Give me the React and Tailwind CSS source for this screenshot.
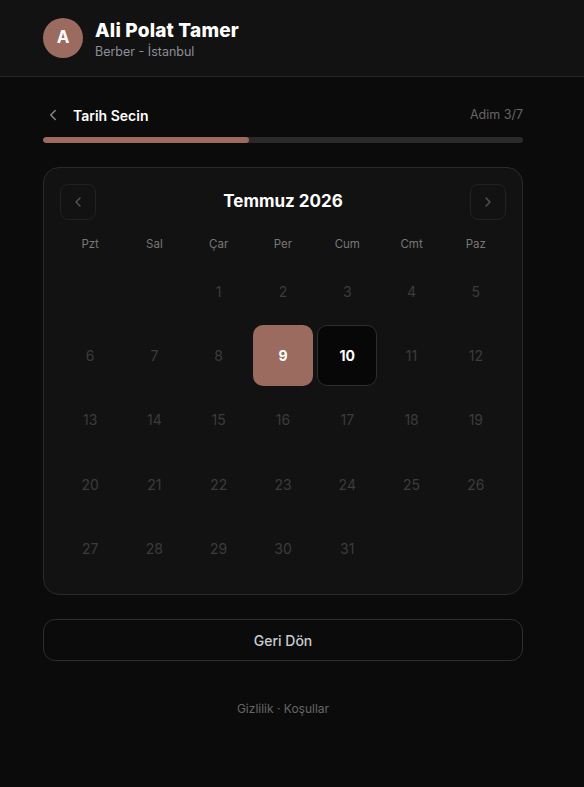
import React, { useState } from 'react';
import { ChevronLeft, ChevronRight } from 'lucide-react';

const WEEKDAYS = ['Pzt', 'Sal', 'Çar', 'Per', 'Cum', 'Cmt', 'Paz'];

// July 2026 starts on a Wednesday -> two empty slots before the 1st
const LEAD = 2;
const DAYS_IN_MONTH = 31;

export default function App() {
  const [selected, setSelected] = useState(9);
  const today = 10;

  const cells = [
    ...Array.from({ length: LEAD }, () => null),
    ...Array.from({ length: DAYS_IN_MONTH }, (_, i) => i + 1),
  ];

  return (
    <div className="min-h-screen bg-[#0b0b0b] text-white font-['Inter',sans-serif]">
      {/* HEADER */}
      <header className="h-[77px] bg-[#121212] border-b border-[#262626] pl-[43px] pr-[61px] flex items-center gap-3">
        <div className="w-10 h-10 rounded-full bg-[#9a6b5e] flex items-center justify-center text-[17px] font-bold text-white">
          A
        </div>
        <div className="flex flex-col pt-[2px]">
          <h1 className="text-[19px] leading-6 font-extrabold tracking-[0.01em] text-white">Ali Polat Tamer</h1>
          <p className="text-[12.5px] leading-4 text-[#8a8f98] mt-[1px]">Berber - İstanbul</p>
        </div>
      </header>

      <main className="pl-[43px] pr-[61px] pt-7">
        {/* STEP TITLE */}
        <div className="flex items-center justify-between h-5">
          <div className="flex items-center gap-[11px]">
            <ChevronLeft className="w-[18px] h-[18px] text-[#888] ml-[1px]" strokeWidth={2} />
            <span className="text-[14px] font-semibold text-white">Tarih Secin</span>
          </div>
          <span className="text-[12.5px] text-[#666]">Adim 3/7</span>
        </div>

        {/* PROGRESS */}
        <div className="mt-3 h-[6px] rounded-full bg-[#2a2a2a] overflow-hidden">
          <div className="h-full rounded-full bg-[#9a6b5e] w-[42.86%]"></div>
        </div>

        {/* CALENDAR */}
        <div className="mt-6 rounded-2xl border border-[#2a2a2a] bg-[#121212] p-4">
          <div className="flex items-center justify-between">
            <button className="w-9 h-9 rounded-lg border border-[#222] flex items-center justify-center text-[#555]">
              <ChevronLeft className="w-4 h-4" />
            </button>
            <span className="text-[17px] font-bold text-white">Temmuz 2026</span>
            <button className="w-9 h-9 rounded-lg border border-[#222] flex items-center justify-center text-[#555]">
              <ChevronRight className="w-4 h-4" />
            </button>
          </div>

          <div className="grid grid-cols-7 gap-1 mt-4 mb-[9px]">
            {WEEKDAYS.map((d) => (
              <div key={d} className="text-center text-[11.5px] leading-4 text-[#777]">{d}</div>
            ))}
          </div>

          <div className="grid grid-cols-7 gap-1">
            {cells.map((day, i) => {
              if (day === null) return <div key={`e${i}`} className="aspect-square" />;
              const isSel = day === selected;
              const isToday = day === today;
              return (
                <button
                  key={day}
                  onClick={() => setSelected(day)}
                  className={`aspect-square rounded-[10px] flex items-center justify-center text-[14px] ${
                    isSel
                      ? 'bg-[#9a6b5e] text-white font-bold'
                      : isToday
                      ? 'bg-[#070707] border border-[#2e2e2e] text-white font-bold'
                      : 'text-[#3c3c3c]'
                  }`}
                >
                  {day}
                </button>
              );
            })}
          </div>
        </div>

        {/* BACK BUTTON */}
        <button className="mt-6 w-full h-[42px] rounded-xl border border-[#2e2e2e] text-[14px] font-medium text-[#c9ccd2]">
          Geri Dön
        </button>

        <p className="mt-10 text-center text-[12px] leading-4 text-[#666]">Gizlilik · Koşullar</p>
      </main>
    </div>
  );
}
